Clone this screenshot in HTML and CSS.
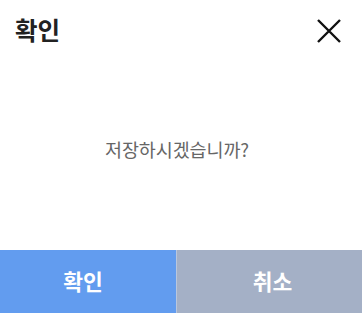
FILE: index.html
```html
<!DOCTYPE html>
<html lang="ko">
<head>
<meta charset="utf-8">
<link rel="stylesheet" href="styles.css">
</head>
<body>
<div class="dialog">
  <div class="header">
    <h1 class="title">확인</h1>
    <button class="close" aria-label="닫기">
      <svg width="24" height="24" viewBox="0 0 24 24"><path d="M1 1 L23 23 M23 1 L1 23" stroke="#111" stroke-width="2.4" fill="none"/></svg>
    </button>
  </div>
  <div class="body">
    <p class="message">저장하시겠습니까?</p>
  </div>
  <div class="actions">
    <button class="btn btn-ok">확인</button>
    <button class="btn btn-cancel">취소</button>
  </div>
</div>
</body>
</html>
```
FILE: styles.css
```css
html, body {
  margin: 0;
  padding: 0;
  background: #fff;
}
body {
  font-family: "Noto Sans CJK KR", "Noto Sans", sans-serif;
}
.dialog {
  width: 362px;
  height: 313px;
  display: flex;
  flex-direction: column;
}
.header {
  height: 62px;
  display: flex;
  align-items: center;
  justify-content: space-between;
  padding: 0 21px 0 15px;
  box-sizing: border-box;
}
.title {
  margin: 0;
  font-size: 24.5px;
  font-weight: 700;
  color: #222;
  line-height: 1;
  padding-bottom: 1px;
}
.close {
  border: 0;
  background: none;
  padding: 0;
  width: 24px;
  height: 24px;
  display: flex;
  margin-top: -1px;
}
.body {
  flex: 1;
  display: flex;
  align-items: center;
  justify-content: center;
  padding-bottom: 14px;
}
.message {
  margin: 0;
  font-size: 18.5px;
  color: #666;
  line-height: 1;
  letter-spacing: -0.1px;
  padding-right: 8px;
}
.actions {
  height: 63px;
  display: flex;
}
.btn {
  border: 0;
  margin: 0;
  font-family: inherit;
  font-size: 21.5px;
  font-weight: 700;
  color: #fff;
  display: flex;
  align-items: center;
  justify-content: center;
  padding: 0 0 2px;
}
.btn-ok {
  width: 177px;
  background: #629cef;
  border-right: 1px solid #b9c7de;
  padding-right: 10px;
}
.btn-cancel {
  flex: 1;
  background: #a4b0c6;
  padding-left: 6px;
}
```
